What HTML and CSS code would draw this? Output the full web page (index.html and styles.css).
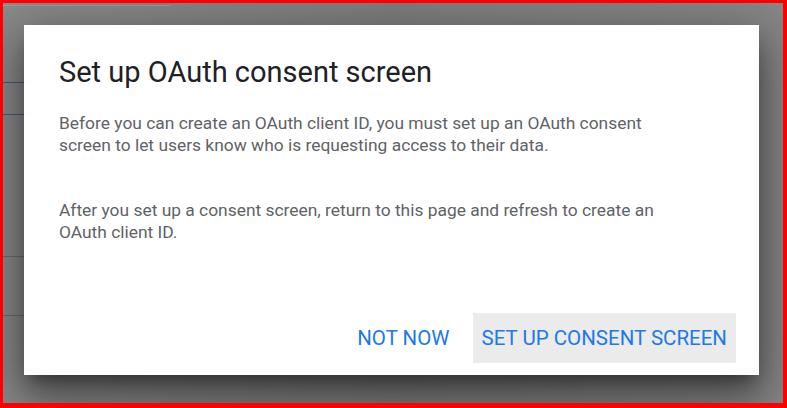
FILE: index.html
```html
<!DOCTYPE html>
<html lang="en">
<head>
  <meta charset="UTF-8">
  <title>Set up OAuth consent screen</title>
  <link rel="stylesheet" href="styles.css">
</head>
<body>
  <div class="frame">
    <div class="backdrop">
      <div class="line line-top"></div>
      <div class="line line-blue l1"></div>
      <div class="line line-blue l2"></div>
      <div class="line line-grey l3"></div>
      <div class="line line-grey l4"></div>

      <div class="dialog">
        <h1>Set up OAuth consent screen</h1>
        <p>Before you can create an OAuth client ID, you must set up an OAuth consent screen to let users know who is requesting access to their data.</p>
        <p>After you set up a consent screen, return to this page and refresh to create an OAuth client ID.</p>
        <div class="actions">
          <button class="btn">NOT NOW</button>
          <button class="btn btn-primary">SET UP CONSENT SCREEN</button>
        </div>
      </div>
    </div>
  </div>
</body>
</html>
```

FILE: styles.css
```css
html, body {
  margin: 0;
  padding: 0;
}
body {
  font-family: Roboto, 'Liberation Sans', sans-serif;
  background: #f00;
}
.frame {
  width: 787px;
  height: 408px;
  box-sizing: border-box;
  border: solid #f00;
  border-width: 3px 4px 5px 3px;
  overflow: hidden;
}
.backdrop {
  position: relative;
  height: 100%;
  background: linear-gradient(90deg, #8a8a8a 0%, #7e7e7e 50%, #878787 100%);
  padding: 22px 24px 0 21px;
  box-sizing: border-box;
}
.line {
  position: absolute;
  left: 0;
  height: 1px;
}
.line-top { top: 2px; width: 168px; background: #9a9a9a; }
.line-blue { width: 21px; background: #3d5e86; }
.line-grey { width: 21px; background: #6e6e6e; }
.l1 { top: 79px; }
.l2 { top: 111px; }
.l3 { top: 253px; }
.l4 { top: 312px; }

.dialog {
  position: relative;
  width: 735px;
  height: 350px;
  box-sizing: border-box;
  background: #fff;
  padding: 29px 23px 12px 35px;
  display: flex;
  flex-direction: column;
  box-shadow: 0 11px 15px -7px rgba(0,0,0,.4), 0 24px 38px 3px rgba(0,0,0,.3), 0 9px 46px 8px rgba(0,0,0,.22);
}
h1 {
  margin: 0 0 22px;
  font-size: 29px;
  font-weight: 400;
  color: #202124;
  line-height: 36px;
}
p {
  margin: 0 0 43px;
  font-size: 17.4px;
  line-height: 22px;
  color: #5f6368;
  max-width: 610px;
}
.actions {
  margin-top: auto;
  display: flex;
  justify-content: flex-end;
  gap: 14px;
}
.btn {
  font-family: inherit;
  font-size: 20.5px;
  font-weight: 400;
  color: #2079e8;
  background: none;
  border: none;
  height: 50px;
  padding: 0 9px;
}
.btn-primary {
  background: #ebebeb;
}
```
